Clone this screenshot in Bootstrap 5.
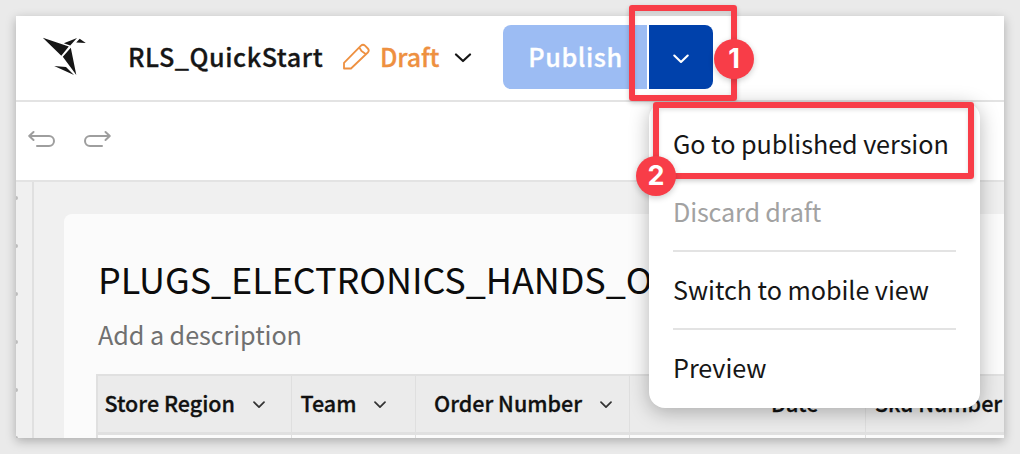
<!DOCTYPE html>
<html lang="en">
<head>
<meta charset="utf-8">
<meta name="viewport" content="width=device-width, initial-scale=1">
<title>RLS_QuickStart</title>
<link href="https://cdn.jsdelivr.net/npm/bootstrap@5.3.0/dist/css/bootstrap.min.css" rel="stylesheet">
<style>
  body { height: 454px; padding: 16px; background: #eaeaea; color: #161616; overflow: hidden; font-family: "Noto Sans CJK SC", "Source Sans Pro", sans-serif; font-size: 25.2px; line-height: 32px; }
  svg { display: block; flex: none; fill: none; stroke-linecap: round; stroke-linejoin: round; }
  .app-window { height: 422px; background: #fff; box-shadow: 0 3px 10px rgba(0,0,0,.27); }
  .app-clip { height: 422px; overflow: hidden; }
  .top-bar { height: 86px; border-bottom: 2px solid #e3e3e3; padding: 0 0 2px 26px; }
  .semi { font-weight: 500; -webkit-text-stroke: .3px currentColor; }
  .bird-logo { fill: #161616; margin-bottom: 1px; }
  .doc-title { width: 194px; margin-left: 42px; letter-spacing: .55px; }
  .edit-icon { margin-left: 20px; }
  .draft-label { color: #ee9040; width: 60px; margin-left: 10px; font-size: 25px; letter-spacing: -.15px; }
  .shift-up { position: relative; top: -1px; }
  .draft-caret { margin: 2px 0 0 14px; }
  .publish-group { gap: 2px; margin-left: 31px; }
  .btn-publish { width: 144px; height: 64px; background: #9cbcf3; color: #fff; font-size: 25.2px; letter-spacing: .6px; line-height: 32px; border: 0; border-radius: 8px 0 0 8px; padding: 0 0 2px 1px; }
  .btn-more { width: 64px; height: 64px; background: #0041ab; border: 0; border-radius: 0 8px 8px 0; padding: 3px 0 0 24px; }
  .tool-bar { height: 80px; border-bottom: 2px solid #e3e3e3; padding: 0 12px 2px; gap: 28px; }
  .work-area { height: 256px; background: #f0f0f0; }
  .ruler { width: 18px; border-right: 2px solid #e0e0e0; padding-top: 14px; }
  .tick { width: 2px; height: 4px; margin-bottom: 44px; background: #bcbcbc; flex: none; border-radius: 0 2px 2px 0; }
  .sheet { margin: 32px 0 0 30px; padding: 44px 0 0 32px; background: #fbfbfb; border-radius: 8px 0 0 0; min-width: 0; overflow: hidden; }
  .sheet-title { font-size: 36px; line-height: 40px; margin: 0; padding-left: 2px; letter-spacing: -.07px; white-space: nowrap; color: #0c0c0c; font-weight: 400; }
  .sheet-note { color: #707070; margin: 20px 0 0; padding-left: 2px; height: 56px; letter-spacing: -.07px; }
  .grid-head { height: 61px; border: solid #e0e0e0; border-width: 2px 0 3px 2px; background: #ebebeb; font-size: 21.5px; color: #111; white-space: nowrap; }
  .grid-cell { border-right: 1px solid #dfdfdf; height: 100%; padding: 0 0 3px 6.5px; flex: none; }
  .grid-cell svg { margin: 4px 0 0 18px; }
  .grid-row { border-left: 2px solid #e0e0e0; height: 8px; }
  .grid-row div { border-right: 1px solid #dfdfdf; flex: none; }
  .c1 { width: 194px; } .c2 { width: 124px; } .c3 { width: 214px; } .c4 { width: 236px; } .c5 { width: 250px; }
  .c2.grid-cell { padding-left: 8.5px; } .c3.grid-cell { padding-left: 18px; } .c4.grid-cell { padding-left: 141px; } .c5.grid-cell { padding-left: 9px; }
  .actions-menu { left: 633px; top: 86px; width: 331px; height: 306px; background: #fff; border-radius: 16px; padding: 8px 24px; box-shadow: 0 4px 20px rgba(0,0,0,.28); letter-spacing: -.06px; z-index: 2; }
  .menu-entry { height: 68px; padding-bottom: 3px; white-space: nowrap; }
  .entry-off { color: #a2a2a2; letter-spacing: -.15px; }
  .menu-line { height: 2px; background: #e3e3e3; margin: 4px 0; }
  .callout-box { border: 6px solid #f83d48; border-radius: 3px; box-shadow: 0 2px 5px rgba(0,0,0,.2), inset 0 2px 4px rgba(0,0,0,.12); z-index: 3; }
  .box-one { left: 613px; top: -11px; width: 108px; height: 96px; }
  .box-two { left: 637px; top: 86px; width: 321px; height: 77px; }
  .callout-num { width: 40px; height: 40px; border-radius: 50%; background: #f83d48; color: #fff; font: 700 27px/40px Inter, sans-serif; text-align: center; box-shadow: 0 2px 6px rgba(0,0,0,.2); z-index: 4; }
  .num-one { left: 698px; top: 23px; }
  .num-two { left: 620px; top: 140px; }
</style>
</head>
<body>
<div class="app-window position-relative">
  <div class="app-clip">
    <header class="top-bar d-flex align-items-center">
      <svg class="bird-logo" width="44" height="40" viewBox="0 0 44 40"><path d="M.8 .8 26.8 9.6 19.3 18.7ZM28.8 10.8 20.8 19.8 34.3 38ZM21.8 6.2 35 .9 28.2 8.6ZM34.2 5.4 37.7 1.7 43.8 5.9ZM12.2 28.9 24 29.9 32 38.1Z"/></svg>
      <div class="doc-title semi shift-up text-nowrap">RLS_QuickStart</div>
      <svg class="edit-icon shift-up" width="28" height="28" viewBox="0 0 28 28" stroke="#ee9040" stroke-width="1.8"><path d="M2 26.5V20.8L19 3.7Q21 1.7 23 3.7L25.8 6.5Q27.8 8.5 25.8 10.5L9 26.5ZM17.3 5.5 19.5 9 24 12.2"/></svg>
      <div class="draft-label semi shift-up">Draft</div>
      <svg class="draft-caret" width="18" height="10" viewBox="0 0 18 10" stroke="#161616" stroke-width="2.2"><path d="M2 1.5 9 8 16 1.5"/></svg>
      <div class="d-flex publish-group">
        <button class="btn-publish semi">Publish</button>
        <button class="btn-more" aria-label="More"><svg width="18" height="10" viewBox="0 0 18 10" stroke="#fff" stroke-width="2.1"><path d="M1.3 1.5 8 8 14.7 1.5"/></svg></button>
      </div>
    </header>
    <div class="tool-bar d-flex align-items-center">
      <svg width="28" height="20" viewBox="0 0 28 20" stroke="#9e9e9e" stroke-width="2"><path d="M5.5 2 1.2 6 5.5 10M1.2 6H21a5 5 0 0 1 0 10H9"/></svg>
      <svg width="28" height="20" viewBox="0 0 28 20" stroke="#9e9e9e" stroke-width="2"><path d="M21.5 2 25.8 6 21.5 10M25.8 6H6a5 5 0 0 0 0 10H18"/></svg>
    </div>
    <main class="work-area d-flex">
      <div class="ruler d-flex flex-column flex-shrink-0">
        <div class="tick"></div><div class="tick"></div><div class="tick"></div><div class="tick"></div><div class="tick"></div><div class="tick"></div>
      </div>
      <section class="sheet flex-grow-1">
        <h1 class="sheet-title">PLUGS_ELECTRONICS_HANDS_O</h1>
        <p class="sheet-note">Add a description</p>
        <div class="grid-head semi d-flex">
          <div class="grid-cell c1 d-flex align-items-center">Store Region<svg width="12" height="8" viewBox="0 0 12 8" stroke="#333" stroke-width="1.7"><path d="M1 1.2 6 6.2 11 1.2"/></svg></div>
          <div class="grid-cell c2 d-flex align-items-center">Team<svg width="12" height="8" viewBox="0 0 12 8" stroke="#333" stroke-width="1.7"><path d="M1 1.2 6 6.2 11 1.2"/></svg></div>
          <div class="grid-cell c3 d-flex align-items-center">Order Number<svg width="12" height="8" viewBox="0 0 12 8" stroke="#333" stroke-width="1.7"><path d="M1 1.2 6 6.2 11 1.2"/></svg></div>
          <div class="grid-cell c4 d-flex align-items-center">Date</div>
          <div class="grid-cell c5 d-flex align-items-center">Sku Number</div>
        </div>
        <div class="grid-row d-flex"><div class="c1"></div><div class="c2"></div><div class="c3"></div><div class="c4"></div></div>
      </section>
    </main>
  </div>
  <div class="actions-menu position-absolute">
    <div class="menu-entry d-flex align-items-center">Go to published version</div>
    <div class="menu-entry entry-off d-flex align-items-center">Discard draft</div>
    <div class="menu-line"></div>
    <div class="menu-entry d-flex align-items-center">Switch to mobile view</div>
    <div class="menu-line"></div>
    <div class="menu-entry d-flex align-items-center">Preview</div>
  </div>
  <div class="callout-box box-one position-absolute"></div>
  <div class="callout-box box-two position-absolute"></div>
  <div class="callout-num num-one position-absolute">1</div>
  <div class="callout-num num-two position-absolute">2</div>
</div>
<script src="https://cdn.jsdelivr.net/npm/bootstrap@5.3.0/dist/js/bootstrap.bundle.min.js"></script>
</body>
</html>
